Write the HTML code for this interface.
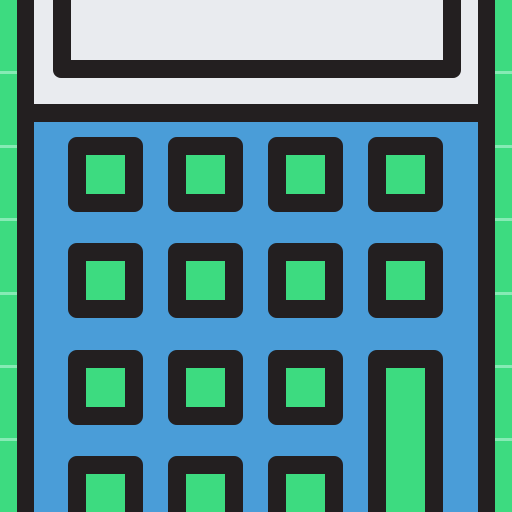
<!DOCTYPE html><html><head><style>
html,body{margin:0;width:512px;height:512px;overflow:hidden}
body{position:relative;background:#3ddb80}
div{position:absolute;box-sizing:border-box}
.l{left:0;width:512px;height:3px;background:#86ebb5}
.k{width:75px;height:75px;background:#231f20;border-radius:9px}
.k i{position:absolute;left:18px;top:18px;right:18px;bottom:18px;background:#3ddb80}
</style></head><body>
<div class="l" style="top:71px"></div><div class="l" style="top:145px"></div><div class="l" style="top:218px"></div><div class="l" style="top:292px"></div><div class="l" style="top:365px"></div><div class="l" style="top:438px"></div>
<div style="left:17px;top:0;width:478px;height:512px;background:#231f20"></div>
<div style="left:34px;top:0;width:444px;height:104px;background:#e9ebef"></div>
<div style="left:53px;top:-20px;width:408px;height:98px;background:#231f20;border-radius:8px"></div>
<div style="left:71px;top:0;width:372px;height:60px;background:#e9ebef"></div>
<div style="left:34px;top:122px;width:444px;height:390px;background:#4a9dd8"></div>
<div class="k" style="left:68px;top:137px"><i></i></div>
<div class="k" style="left:168px;top:137px"><i></i></div>
<div class="k" style="left:268px;top:137px"><i></i></div>
<div class="k" style="left:368px;top:137px"><i></i></div>
<div class="k" style="left:68px;top:243px"><i></i></div>
<div class="k" style="left:168px;top:243px"><i></i></div>
<div class="k" style="left:268px;top:243px"><i></i></div>
<div class="k" style="left:368px;top:243px"><i></i></div>
<div class="k" style="left:68px;top:350px"><i></i></div>
<div class="k" style="left:168px;top:350px"><i></i></div>
<div class="k" style="left:268px;top:350px"><i></i></div>
<div class="k" style="left:368px;top:350px;height:162px;border-radius:9px 9px 0 0"><i style="bottom:0"></i></div>
<div class="k" style="left:68px;top:456px;height:56px;border-radius:9px 9px 0 0"><i style="bottom:0"></i></div>
<div class="k" style="left:168px;top:456px;height:56px;border-radius:9px 9px 0 0"><i style="bottom:0"></i></div>
<div class="k" style="left:268px;top:456px;height:56px;border-radius:9px 9px 0 0"><i style="bottom:0"></i></div>
</body></html>
